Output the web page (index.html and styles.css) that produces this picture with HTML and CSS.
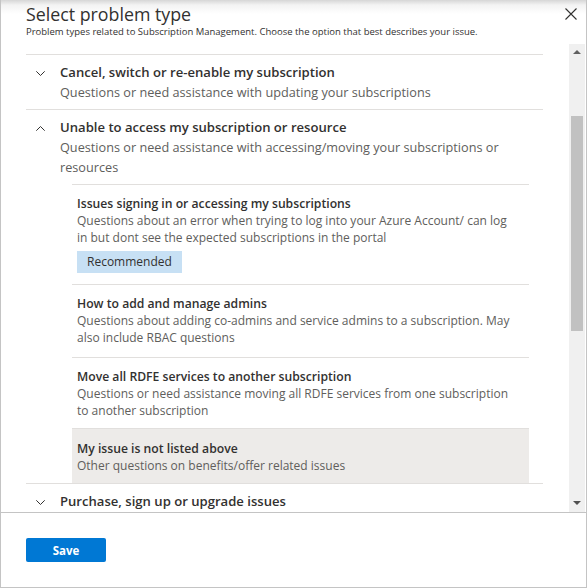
FILE: index.html
```html
<!DOCTYPE html>
<html lang="en">
<head>
<meta charset="utf-8">
<title>Select problem type</title>
<link rel="stylesheet" href="styles.css">
</head>
<body>
<div class="panel">
  <header class="header">
    <div class="title">Select problem type</div>
    <div class="subtitle">Problem types related to Subscription Management. Choose the option that best describes your issue.</div>
    <button class="close" aria-label="Close">
      <svg width="12" height="12" viewBox="0 0 12 12"><path d="M0.5 0.5 L11.5 11.5 M11.5 0.5 L0.5 11.5" stroke="#323130" stroke-width="1.1" fill="none"/></svg>
    </button>
  </header>
  <div class="scroll">
    <div class="content">
      <div class="row">
        <svg class="chev" width="9" height="5" viewBox="0 0 9 5"><path d="M0.3 0.3 L4.5 4.5 L8.7 0.3" stroke="#323130" stroke-width="1" fill="none"/></svg>
        <div class="row-body">
          <div class="row-title">Cancel, switch or re-enable my subscription</div>
          <div class="row-desc">Questions or need assistance with updating your subscriptions</div>
        </div>
      </div>
      <div class="row open">
        <svg class="chev" width="9" height="5" viewBox="0 0 9 5"><path d="M0.3 4.7 L4.5 0.5 L8.7 4.7" stroke="#323130" stroke-width="1" fill="none"/></svg>
        <div class="row-body">
          <div class="row-title">Unable to access my subscription or resource</div>
          <div class="row-desc">Questions or need assistance with accessing/moving your subscriptions or resources</div>
        </div>
        <div class="subs">
          <div class="sub">
            <div class="sub-title">Issues signing in or accessing my subscriptions</div>
            <div class="sub-desc">Questions about an error when trying to log into your Azure Account/ can log<br>in but dont see the expected subscriptions in the portal</div>
            <span class="badge">Recommended</span>
          </div>
          <div class="sub">
            <div class="sub-title">How to add and manage admins</div>
            <div class="sub-desc">Questions about adding co-admins and service admins to a subscription. May<br>also include RBAC questions</div>
          </div>
          <div class="sub tight">
            <div class="sub-title">Move all RDFE services to another subscription</div>
            <div class="sub-desc">Questions or need assistance moving all RDFE services from one subscription<br>to another subscription</div>
          </div>
          <div class="sub selected">
            <div class="sub-title">My issue is not listed above</div>
            <div class="sub-desc">Other questions on benefits/offer related issues</div>
          </div>
        </div>
      </div>
      <div class="row">
        <svg class="chev" width="9" height="5" viewBox="0 0 9 5"><path d="M0.3 0.3 L4.5 4.5 L8.7 0.3" stroke="#323130" stroke-width="1" fill="none"/></svg>
        <div class="row-body">
          <div class="row-title">Purchase, sign up or upgrade issues</div>
        </div>
      </div>
    </div>
    <div class="scrollbar">
      <div class="arrow up"></div>
      <div class="track"><div class="thumb"></div></div>
      <div class="arrow down"></div>
    </div>
  </div>
  <footer class="footer">
    <button class="save">Save</button>
  </footer>
</div>
</body>
</html>
```

FILE: styles.css
```css
* { box-sizing: border-box; }
html, body { margin: 0; padding: 0; background: #fff; }
body {
  font-family: "Open Sans", "Noto Sans", sans-serif;
  color: #323130;
}
.panel {
  width: 587px;
  height: 588px;
  border: 1px solid #c4c4c4;
  border-top: none;
  display: flex;
  flex-direction: column;
  background: #fff;
}
.header {
  position: relative;
  height: 44px;
  padding: 2px 0 0 25px;
  background: linear-gradient(#d6d6d6 0px, #f3f3f3 5px, #ffffff 14px);
}
.title {
  font-size: 17.8px;
  line-height: 24px;
  color: #323130;
}
.subtitle {
  font-size: 9.5px;
  line-height: 12px;
  color: #323130;
  white-space: nowrap;
}
.close {
  position: absolute;
  left: 564px;
  top: 8px;
  width: 12px;
  height: 12px;
  padding: 0;
  border: none;
  background: transparent;
  display: block;
}
.close svg { display: block; }
.scroll {
  height: 468px;
  display: flex;
  overflow: hidden;
}
.content {
  flex: 1;
  padding: 10px 26px 0 25px;
  overflow: hidden;
}
.row {
  border-top: 1px solid #e1dfdd;
  display: flex;
  flex-wrap: wrap;
  padding: 7px 0 7px 0;
}
.row.open { padding-bottom: 0; }
.chev {
  margin: 9px 0 0 10px;
  width: 9px;
  height: 5px;
  flex: none;
}
.row-body {
  margin-left: 15px;
  flex: 1;
}
.row-title {
  font-size: 13.1px;
  line-height: 20px;
  font-weight: 600;
  color: #323130;
}
.row-desc {
  font-size: 12.7px;
  line-height: 20px;
  color: #605e5c;
}
.subs {
  width: 100%;
  margin: 7px 14px 0 46px;
}
.sub {
  border-top: 1px solid #e1dfdd;
  padding: 10px 5px 11px 5px;
}
.sub.tight { padding-bottom: 9px; }
.sub.selected {
  background: #edebe9;
  padding: 11px 5px 9px 5px;
}
.sub-title {
  font-size: 12.2px;
  line-height: 17px;
  font-weight: 600;
  color: #323130;
}
.sub-desc {
  font-size: 12px;
  line-height: 17px;
  color: #605e5c;
  white-space: nowrap;
}
.badge {
  display: inline-block;
  margin-top: 5px;
  height: 22px;
  line-height: 22px;
  padding: 0 10px;
  font-size: 12px;
  background: #c7e0f4;
  color: #323130;
}
.scrollbar {
  width: 16px;
  margin-right: 1px;
  background: #f0f0f0;
  display: flex;
  flex-direction: column;
  align-items: center;
}
.arrow {
  width: 0;
  height: 0;
  border-left: 4px solid transparent;
  border-right: 4px solid transparent;
}
.arrow.up {
  margin-top: 6px;
  border-bottom: 4px solid #606060;
}
.track {
  flex: 1;
  width: 100%;
  padding: 0 2px;
}
.thumb {
  margin-top: 62px;
  height: 215px;
  background: #c1c1c1;
}
.arrow.down {
  margin-bottom: 7px;
  border-top: 4px solid #505050;
}
.footer {
  flex: 1;
  border-top: 1px solid #c4c4c4;
  padding: 25px 0 0 25px;
}
.save {
  width: 80px;
  height: 24px;
  border: none;
  border-radius: 2px;
  background: #0078d4;
  color: #fff;
  font-family: "Open Sans", "Noto Sans", sans-serif;
  font-weight: 700;
  font-size: 11.5px;
  padding: 0;
  display: block;
}
```
